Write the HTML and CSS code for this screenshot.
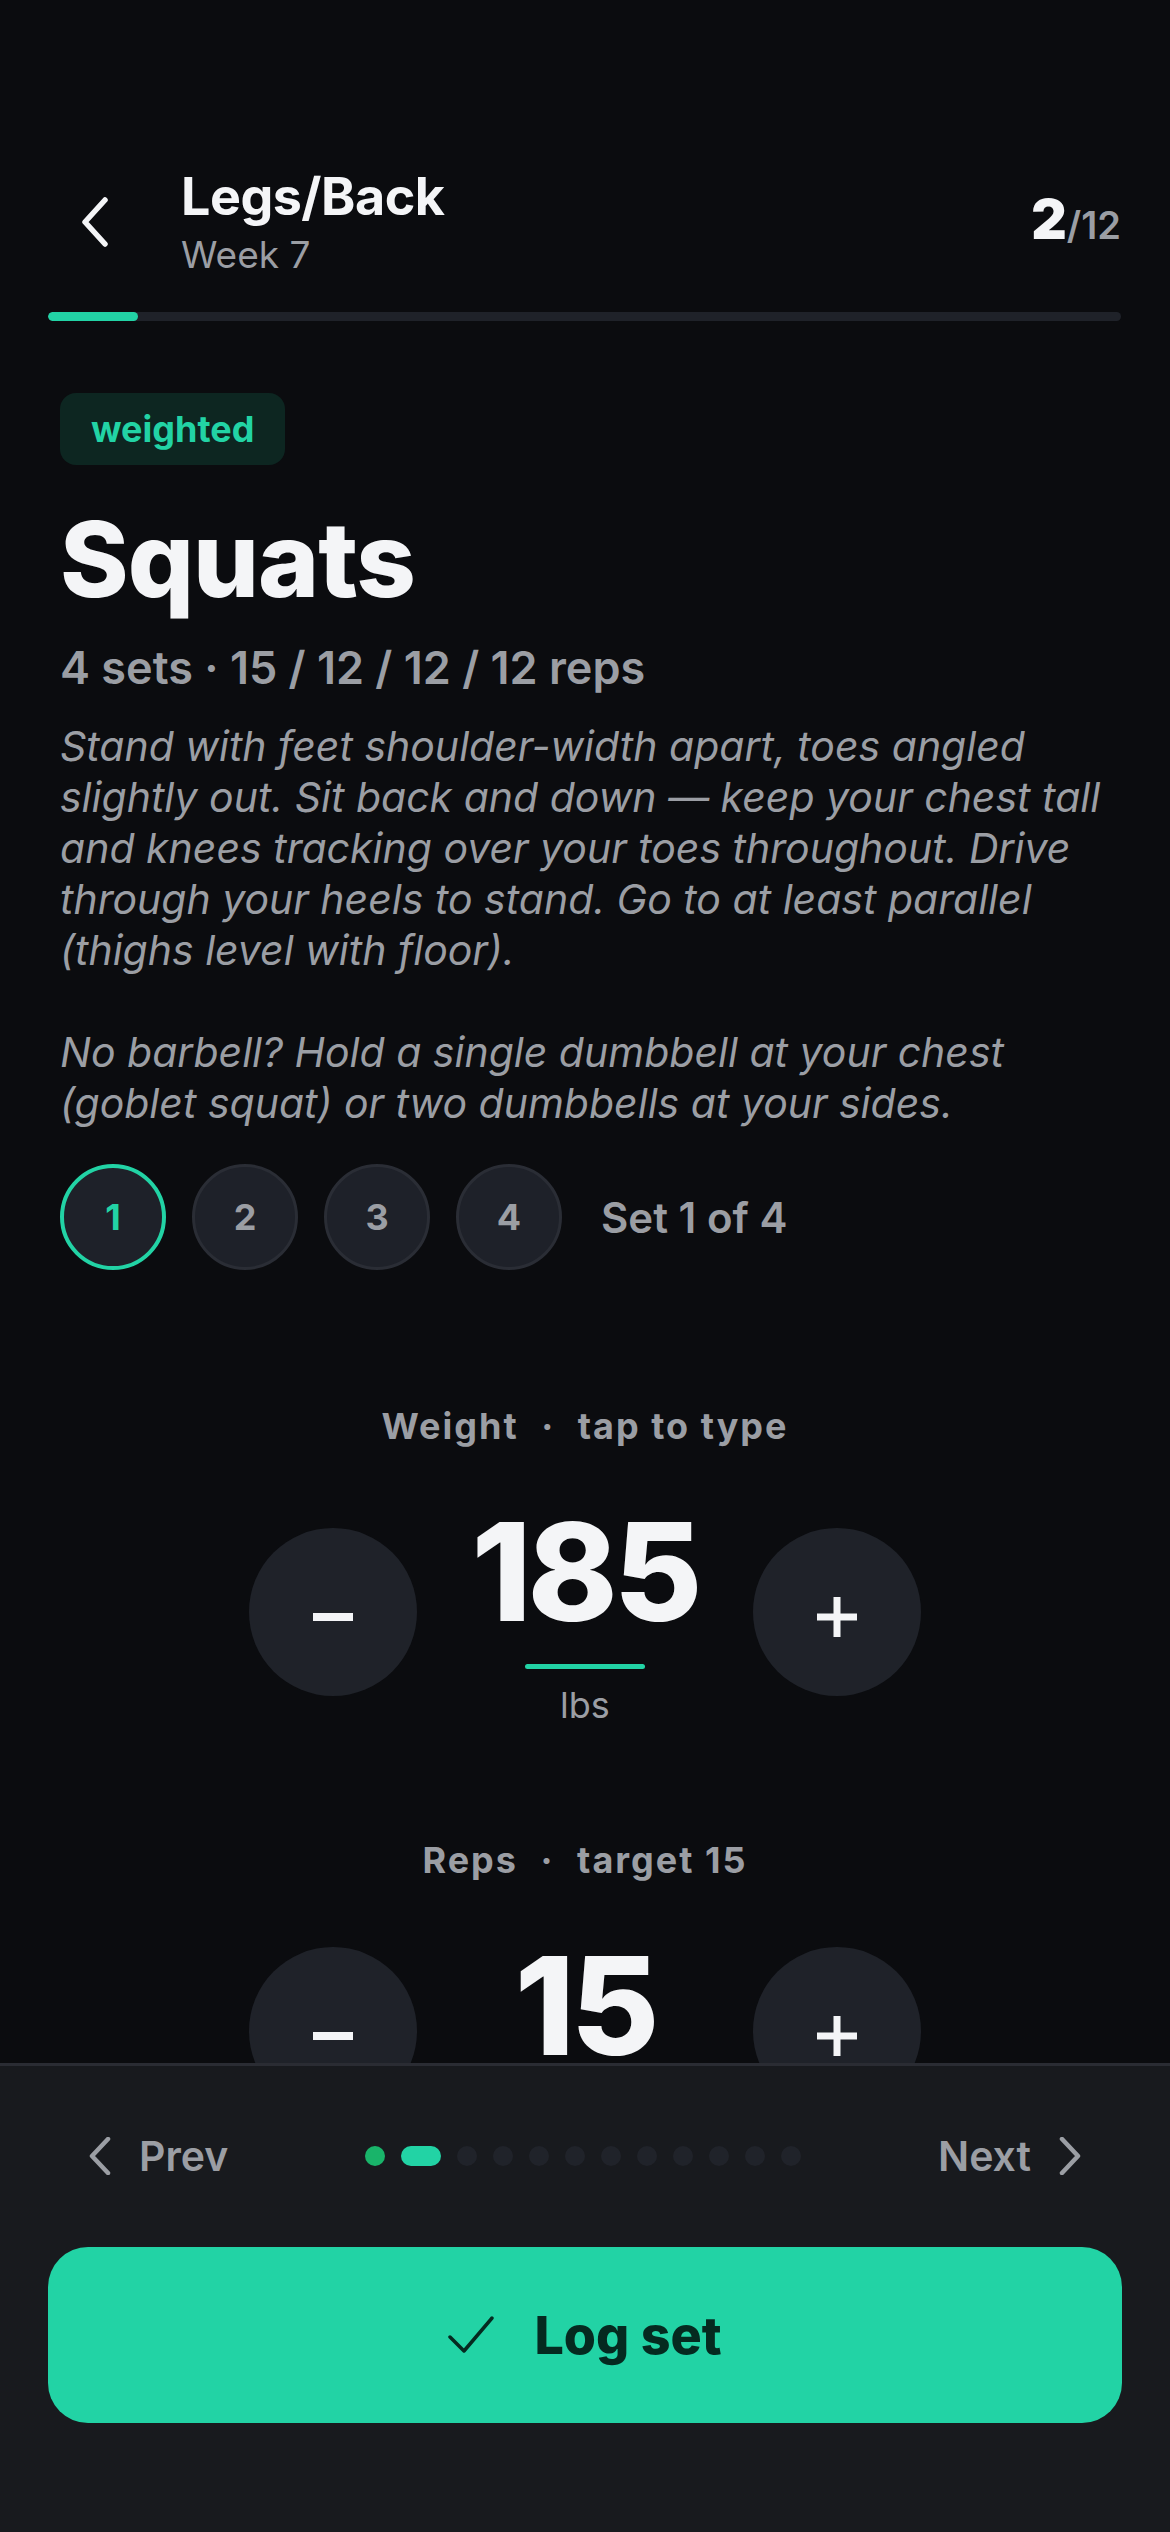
FILE: index.html
```html
<!DOCTYPE html>
<html lang="en">
<head>
  <meta charset="UTF-8" />
  <meta name="viewport" content="width=device-width, initial-scale=1.0"/>
  <title>Legs/Back - Week 7</title>
  <link rel="stylesheet" href="styles.css">
</head>
<body>

  <header class="top">
    <div class="top-row">
      <button class="back" type="button" aria-label="Back">
        <svg width="30" height="50" viewBox="0 0 30 50"><path d="M25 3 L5 25 L25 47" fill="none" stroke="#f4f5f7" stroke-width="5.5" stroke-linecap="round" stroke-linejoin="round"/></svg>
      </button>
      <div class="titles">
        <h1>Legs/Back</h1>
        <div class="week">Week 7</div>
      </div>
      <div class="count"><b>2</b><span>/12</span></div>
    </div>
    <div class="progress"><div class="progress-fill" style="width: 8.4%"></div></div>
  </header>

  <main class="exercise">
    <div class="badge">weighted</div>
    <h2 class="name">Squats</h2>
    <div class="scheme">4 sets · 15 / 12 / 12 / 12 reps</div>

    <div class="desc">
      <p>Stand with feet shoulder-width apart, toes angled slightly out. Sit back and down — keep your chest tall and knees tracking over your toes throughout. Drive through your heels to stand. Go to at least parallel (thighs level with floor).</p>
      <p>No barbell? Hold a single dumbbell at your chest (goblet squat) or two dumbbells at your sides.</p>
    </div>

    <div class="sets">
      <button class="set current" type="button">1</button>
      <button class="set" type="button">2</button>
      <button class="set" type="button">3</button>
      <button class="set" type="button">4</button>
      <span class="set-label">Set 1 of 4</span>
    </div>

    <section class="field weight-field">
      <div class="field-label">Weight <span class="sep">·</span> tap to type</div>
      <div class="stepper">
        <button class="step" type="button" aria-label="Less">
          <svg width="40" height="40" viewBox="0 0 40 40"><path d="M0 20 H40" stroke="#f4f5f7" stroke-width="8"/></svg>
        </button>
        <div class="value">
          <div class="num">185</div>
          <div class="focus-line"></div>
          <div class="unit">lbs</div>
        </div>
        <button class="step" type="button" aria-label="More">
          <svg width="40" height="40" viewBox="0 0 40 40"><path d="M0 20 H40 M20 0 V40" stroke="#f4f5f7" stroke-width="7"/></svg>
        </button>
      </div>
    </section>

    <section class="field reps-field">
      <div class="field-label">Reps <span class="sep">·</span> target 15</div>
      <div class="stepper">
        <button class="step" type="button" aria-label="Less">
          <svg width="40" height="40" viewBox="0 0 40 40"><path d="M0 20 H40" stroke="#f4f5f7" stroke-width="8"/></svg>
        </button>
        <div class="value">
          <div class="num">15</div>
          <div class="unit">reps</div>
        </div>
        <button class="step" type="button" aria-label="More">
          <svg width="40" height="40" viewBox="0 0 40 40"><path d="M0 20 H40 M20 0 V40" stroke="#f4f5f7" stroke-width="7"/></svg>
        </button>
      </div>
    </section>
  </main>

  <footer class="bottom">
    <div class="nav">
      <button class="nav-btn" type="button">
        <svg width="24" height="38" viewBox="0 0 24 38"><path d="M20 2 L4 19 L20 36" fill="none" stroke="#9b9ea4" stroke-width="4.5" stroke-linecap="round" stroke-linejoin="round"/></svg>
        Prev
      </button>
      <div class="dots">
        <span class="dot done"></span>
        <span class="dot current"></span>
        <span class="dot"></span>
        <span class="dot"></span>
        <span class="dot"></span>
        <span class="dot"></span>
        <span class="dot"></span>
        <span class="dot"></span>
        <span class="dot"></span>
        <span class="dot"></span>
        <span class="dot"></span>
        <span class="dot"></span>
      </div>
      <button class="nav-btn" type="button">
        Next
        <svg width="24" height="38" viewBox="0 0 24 38"><path d="M4 2 L20 19 L4 36" fill="none" stroke="#9b9ea4" stroke-width="4.5" stroke-linecap="round" stroke-linejoin="round"/></svg>
      </button>
    </div>
    <button class="log-btn" type="button">
      <svg width="46" height="38" viewBox="0 0 46 38"><path d="M2 21 L16 35 L44 2" fill="none" stroke="#052a20" stroke-width="3.5" stroke-linecap="round" stroke-linejoin="round"/></svg>
      Log set
    </button>
  </footer>

</body>
</html>
```

FILE: styles.css
```css
* { box-sizing: border-box; }

body {
  font-family: 'Inter', 'Noto Sans', sans-serif;
  background: #0b0c0f;
  margin: 0;
  padding: 0;
  color: #f4f5f7;
  height: 2532px;
  overflow: hidden;
}

button {
  font-family: inherit;
  border: none;
  background: none;
  padding: 0;
  cursor: pointer;
}

/* header */

.top {
  padding: 167px 49px 0 48px;
}

.top-row {
  display: flex;
  align-items: center;
}

.back {
  width: 133px;
  height: 60px;
  padding-left: 32px;
  display: flex;
  align-items: center;
}

.titles {
  flex: 1;
}

h1 {
  margin: 0;
  font-size: 52px;
  line-height: 60px;
  font-weight: 700;
  letter-spacing: -0.5px;
}

.week {
  margin-top: 6px;
  font-size: 37px;
  line-height: 44px;
  color: #9b9ea4;
}

.count {
  font-size: 55px;
  line-height: 66px;
  font-weight: 700;
}

.count span {
  font-size: 38px;
  font-weight: 600;
  color: #9b9ea4;
}

.progress {
  margin-top: 35px;
  height: 9px;
  border-radius: 5px;
  background: #1f2229;
  overflow: hidden;
}

.progress-fill {
  height: 100%;
  border-radius: 5px;
  background: #22d3a5;
}

/* exercise */

.exercise {
  padding: 72px 60px 0;
}

.badge {
  width: fit-content;
  height: 72px;
  line-height: 72px;
  padding: 0 31px;
  border-radius: 16px;
  background: #0d2621;
  color: #22d3a5;
  font-size: 36px;
  font-weight: 700;
}

.name {
  margin: 32px 0 0;
  font-size: 104px;
  line-height: 125px;
  font-weight: 800;
  letter-spacing: -1px;
}

.scheme {
  margin-top: 19px;
  font-size: 45px;
  line-height: 54px;
  font-weight: 600;
  color: #9b9ea4;
}

.desc {
  margin-top: 26px;
  font-size: 41px;
  line-height: 51px;
  font-style: italic;
  color: #9b9ea4;
}

.desc p {
  margin: 0;
}

.desc p + p {
  margin-top: 51px;
}

.sets {
  margin-top: 35px;
  display: flex;
  align-items: center;
  gap: 26px;
}

.set {
  width: 106px;
  height: 106px;
  border-radius: 50%;
  background: #1e2129;
  border: 3px solid #2a2d35;
  color: #9b9ea4;
  font-size: 36px;
  font-weight: 700;
  display: flex;
  align-items: center;
  justify-content: center;
}

.set.current {
  border: 4px solid #22d3a5;
  color: #22d3a5;
}

.set-label {
  margin-left: 13px;
  font-size: 42px;
  font-weight: 600;
  color: #9b9ea4;
}

/* steppers */

.field-label {
  text-align: center;
  font-size: 36px;
  line-height: 40px;
  font-weight: 700;
  letter-spacing: 2px;
  color: #9b9ea4;
}

.field-label .sep {
  margin: 0 12px;
}

.weight-field {
  margin-top: 136px;
}

.reps-field {
  margin-top: 113px;
}

.stepper {
  margin-top: 58px;
  display: flex;
  justify-content: center;
  align-items: center;
}

.step {
  width: 168px;
  height: 168px;
  margin-bottom: 8px;
  border-radius: 50%;
  background: #1f2229;
  display: flex;
  align-items: center;
  justify-content: center;
  padding-top: 10px;
}

.value {
  width: 336px;
  display: flex;
  flex-direction: column;
  align-items: center;
}

.num {
  font-size: 136px;
  line-height: 136px;
  font-weight: 800;
  letter-spacing: -4px;
}

.focus-line {
  margin-top: 24px;
  width: 120px;
  height: 5px;
  border-radius: 3px;
  background: #22d3a5;
}

.unit {
  margin-top: 14px;
  font-size: 36px;
  line-height: 44px;
  color: #9b9ea4;
}

/* bottom bar */

.bottom {
  position: fixed;
  left: 0;
  right: 0;
  bottom: 0;
  height: 469px;
  padding: 60px 48px 0;
  background: #181a1e;
  border-top: 3px solid #2a2c33;
}

.nav {
  height: 60px;
  padding: 0 40px;
  display: flex;
  align-items: center;
  justify-content: space-between;
}

.nav-btn {
  display: flex;
  align-items: center;
  gap: 27px;
  font-size: 41px;
  font-weight: 600;
  color: #9b9ea4;
}

.dots {
  display: flex;
  align-items: center;
  gap: 16px;
}

.dot {
  width: 20px;
  height: 20px;
  border-radius: 10px;
  background: #20232a;
}

.dot.done {
  background: #19b46a;
}

.dot.current {
  width: 40px;
  background: #22d3a5;
}

.log-btn {
  margin-top: 61px;
  width: 100%;
  height: 176px;
  border-radius: 40px;
  background: #22d3a5;
  color: #052a20;
  font-size: 52px;
  font-weight: 800;
  display: flex;
  align-items: center;
  justify-content: center;
  gap: 40px;
}
```
